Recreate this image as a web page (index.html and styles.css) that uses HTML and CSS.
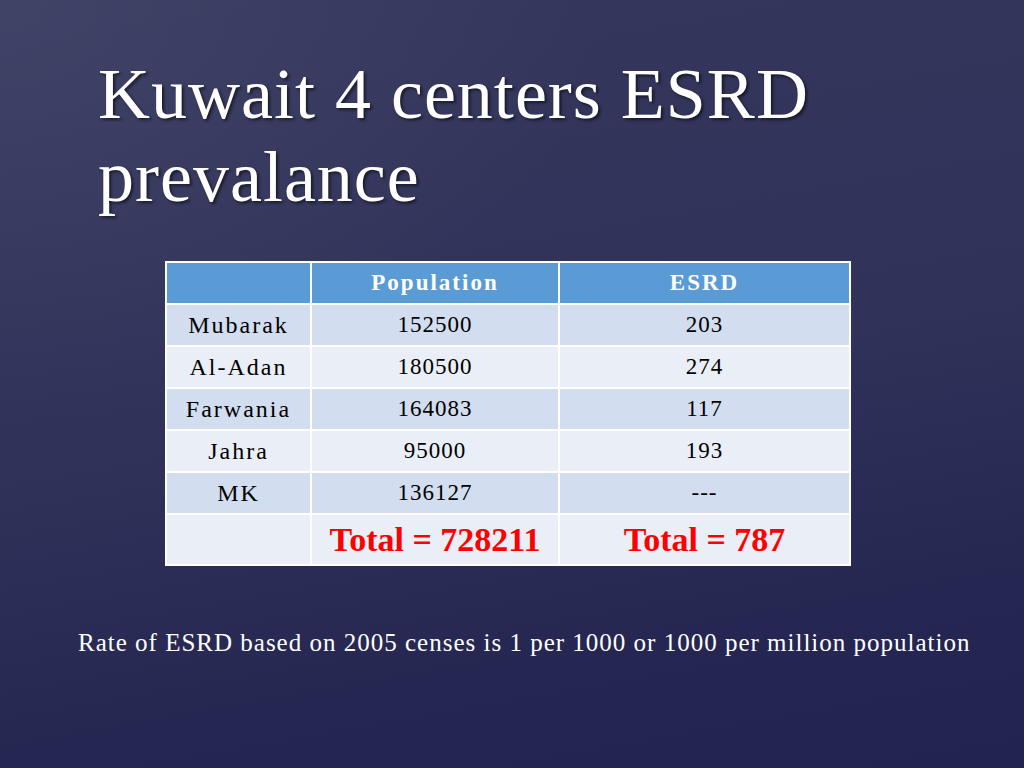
FILE: index.html
```html
<!DOCTYPE html>
<html>
<head>
<meta charset="utf-8">
<link rel="stylesheet" href="styles.css">
</head>
<body>
<div class="slide">
  <h1 class="title">Kuwait 4 centers ESRD<br>prevalance</h1>
  <div class="table-wrap">
    <table class="data">
      <thead>
        <tr><th class="c1"></th><th class="c2">Population</th><th class="c3">ESRD</th></tr>
      </thead>
      <tbody>
        <tr class="odd"><td class="name">Mubarak</td><td class="num">152500</td><td class="num">203</td></tr>
        <tr class="even"><td class="name">Al-Adan</td><td class="num">180500</td><td class="num">274</td></tr>
        <tr class="odd"><td class="name">Farwania</td><td class="num">164083</td><td class="num">117</td></tr>
        <tr class="even"><td class="name">Jahra</td><td class="num">95000</td><td class="num">193</td></tr>
        <tr class="odd"><td class="name">MK</td><td class="num">136127</td><td class="num">---</td></tr>
        <tr class="even total"><td></td><td>Total = 728211</td><td>Total = 787</td></tr>
      </tbody>
    </table>
  </div>
  <p class="note">Rate of ESRD based on 2005 censes is 1 per 1000 or 1000 per million population</p>
</div>
</body>
</html>
```

FILE: styles.css
```css
html, body {
  margin: 0;
  padding: 0;
}
body {
  width: 1024px;
  height: 768px;
  overflow: hidden;
}
.slide {
  width: 1024px;
  height: 768px;
  box-sizing: border-box;
  padding-top: 53px;
  background:
    radial-gradient(ellipse 800px 560px at 0% 0%, rgba(72, 74, 110, 0.6), rgba(72, 74, 110, 0) 75%),
    linear-gradient(170deg, #36375c 0%, #30325a 50%, #252752 80%, #222450 100%);
  font-family: "Liberation Serif", "Times New Roman", serif;
  color: #ffffff;
}
.title {
  margin: 0 0 0 98px;
  font-weight: normal;
  font-size: 72px;
  line-height: 83px;
  letter-spacing: 1px;
  text-shadow: 2px 2px 3px rgba(0, 0, 0, 0.55);
}
.table-wrap {
  margin: 42px 0 0 165px;
  width: 684px;
}
.data {
  width: 684px;
  border-collapse: collapse;
  table-layout: fixed;
  color: #000;
  font-size: 23px;
}
.data th, .data td {
  border: 2px solid #ffffff;
  text-align: center;
  padding: 0;
  height: 40px;
}
.c1 { width: 143px; }
.c2 { width: 246px; }
.c3 { width: 289px; }
.data th {
  background: #5b9bd5;
  color: #ffffff;
  font-weight: bold;
  font-size: 23px;
  letter-spacing: 2px;
}
.data .name {
  font-size: 24px;
  letter-spacing: 2px;
}
.data .num {
  letter-spacing: 1px;
}
.odd td { background: #d2deef; }
.even td { background: #eaeff7; }
.total td {
  height: 49px;
  color: #ff0000;
  font-weight: bold;
  font-size: 34px;
}
.note {
  margin: 63px 0 0 78px;
  font-size: 25px;
  letter-spacing: 1px;
  color: #ffffff;
}
```
